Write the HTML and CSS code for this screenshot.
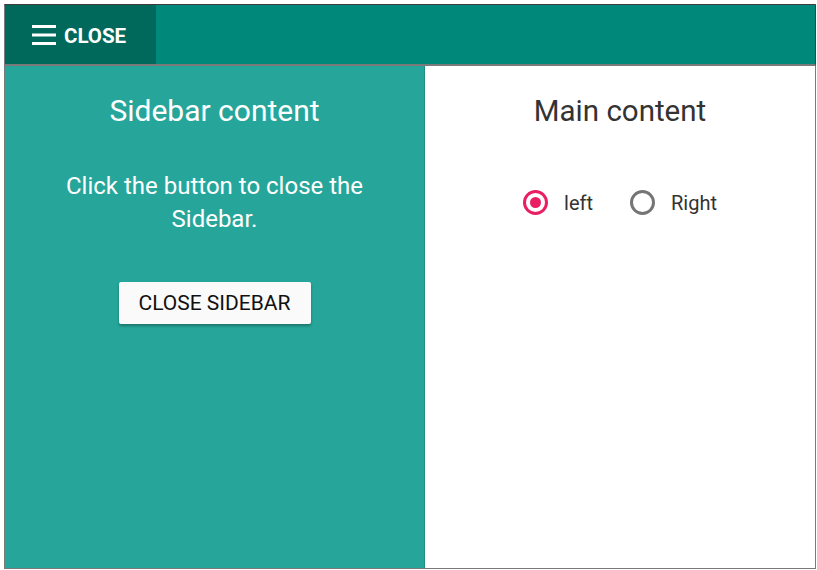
FILE: index.html
```html
<!DOCTYPE html>
<html>
<head>
<meta charset="utf-8">
<link rel="stylesheet" href="styles.css">
</head>
<body>
<div class="app">
  <header class="toolbar">
    <button class="toggle">
      <svg class="menu-icon" width="24" height="20" viewBox="0 0 24 20"><rect x="0" y="0" width="24" height="3" fill="#fff"/><rect x="0" y="8.5" width="24" height="3" fill="#fff"/><rect x="0" y="17" width="24" height="3" fill="#fff"/></svg>
      <span>CLOSE</span>
    </button>
  </header>
  <div class="body">
    <aside class="sidebar">
      <h2 class="title">Sidebar content</h2>
      <p class="text">Click the button to close the Sidebar.</p>
      <button class="close-btn">CLOSE SIDEBAR</button>
    </aside>
    <main class="main">
      <h2 class="title dark">Main content</h2>
      <div class="radios">
        <label class="radio"><span class="dot checked"></span><span class="lbl">left</span></label>
        <label class="radio"><span class="dot"></span><span class="lbl">Right</span></label>
      </div>
    </main>
  </div>
</div>
</body>
</html>
```

FILE: styles.css
```css
* { box-sizing: border-box; }
html, body { margin: 0; padding: 0; background: #fff; }
body { font-family: Roboto, "Noto Sans", sans-serif; }
.app {
  margin: 4px 0 0 4px;
  width: 812px;
  height: 565px;
  border: 1px solid #7a7a7a;
  border-top-color: #3c3c3c;
  display: flex;
  flex-direction: column;
}
.toolbar {
  height: 61px;
  background: #00897b;
  border-bottom: 2px solid #7a7a7a;
  border-right: 1px solid #3c3c3c;
  margin-right: -1px;
  display: flex;
}
.toggle {
  width: 151px;
  height: 59px;
  background: #00695c;
  border: 0;
  margin: 0;
  padding: 2px 0 0 27px;
  display: flex;
  align-items: center;
  gap: 8px;
  color: #fff;
  font-family: Roboto, sans-serif;
  font-weight: 700;
  font-size: 20.5px;
  cursor: pointer;
}
.toggle span { line-height: 1; padding-top: 2px; }
.menu-icon { display: block; margin-top: -1px; }
.body { flex: 1; display: flex; }
.sidebar {
  width: 420px;
  background: #26a69a;
  border-right: 1px solid #1f8f84;
  display: flex;
  flex-direction: column;
  align-items: center;
  padding-top: 29px;
}
.title {
  margin: 0;
  font-size: 30px;
  font-weight: 400;
  line-height: 32px;
  color: #fff;
  text-align: center;
}
.title.dark { color: #333; font-size: 29.5px; }
.text {
  margin: 43px 0 0;
  width: 340px;
  font-size: 24px;
  line-height: 32.5px;
  color: #fff;
  text-align: center;
}
.close-btn {
  margin-top: 47px;
  width: 192px;
  height: 42px;
  background: #fafafa;
  border: 0;
  border-radius: 2px;
  box-shadow: 0 2px 3px rgba(0,0,0,0.3);
  font-family: Roboto, sans-serif;
  font-size: 21px;
  color: #111;
  letter-spacing: 0;
}
.main {
  flex: 1;
  background: #fff;
  display: flex;
  flex-direction: column;
  align-items: center;
  padding-top: 29px;
}
.radios {
  margin-top: 63px;
  display: flex;
  gap: 37px;
  padding-left: 0;
}
.radio { display: flex; align-items: center; gap: 16px; }
.dot {
  width: 25px;
  height: 25px;
  border-radius: 50%;
  border: 3px solid #757575;
  position: relative;
}
.dot.checked { border-color: #e91e63; }
.dot.checked::after {
  content: "";
  position: absolute;
  left: 4px; top: 4px;
  width: 11px; height: 11px;
  border-radius: 50%;
  background: #e91e63;
}
.lbl { font-size: 20px; color: #333; }
```
